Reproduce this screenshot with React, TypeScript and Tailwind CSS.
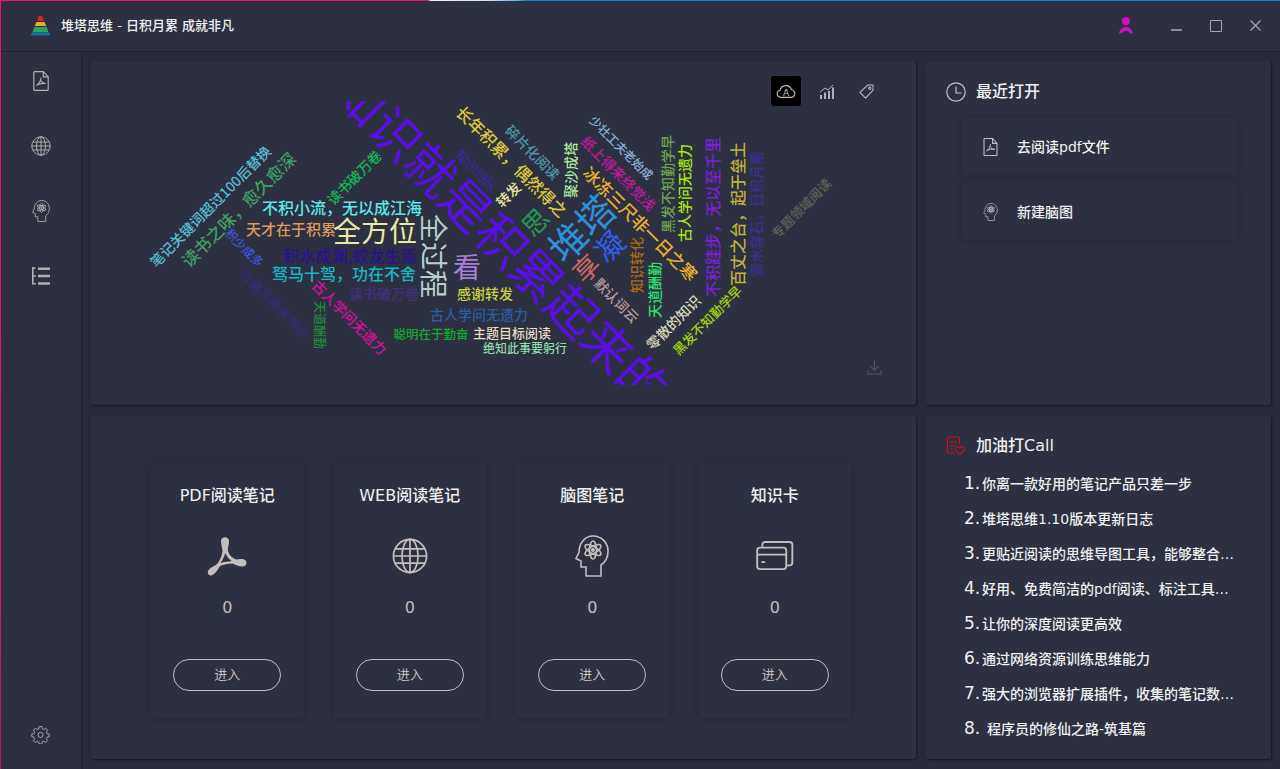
import React from "react";

const words: [string, number, number, number, number, string][] = [
  ["知识就是积累起来的", 504, 238, 50, 45, "#5a0fe8"],
  ["笔记关键词超过100后替换", 210, 206, 14, -45, "#56bfd0"],
  ["读书之味，愈久愈深", 238, 209, 17, -45, "#3f9e63"],
  ["读书破万卷", 354, 177, 14, -45, "#12b956"],
  ["不积小流，无以成江海", 342, 207, 16, 0, "#5fe6e6"],
  ["全方位", 375, 230, 28, 0, "#e8e8a8"],
  ["天才在于积累", 291, 228, 15, 0, "#d99a5a"],
  ["积水成渊,蛟龙生焉", 350, 255, 16, 0, "#2c1292"],
  ["驽马十驾，功在不舍", 344, 273, 16, 0, "#12b8c0"],
  ["积少成多", 245, 247, 12, 45, "#3d55e0"],
  ["日诵万卷读书远", 275, 303, 13, 45, "#3a2a7a"],
  ["读书破万卷", 384, 293, 14, 0, "#45307e"],
  ["古人学问无遗力", 350, 317, 14, 45, "#d60f9a"],
  ["天道酬勤", 320, 325, 12, 90, "#1f8a3a"],
  ["聪明在于勤奋", 431, 333, 12.5, 0, "#12a82e"],
  ["主题目标阅读", 512, 332, 13, 0, "#e6dcc0"],
  ["绝知此事要躬行", 525, 347, 12, 0, "#8fdcaa"],
  ["古人学问无遗力", 479, 314, 14, 0, "#2a5ea0"],
  ["感谢转发", 485, 293, 14, 0, "#c8d23c"],
  ["看", 467, 266, 28, 0, "#a87fd6"],
  ["全过程", 435, 256, 28, 90, "#b8d0c8"],
  ["长年积累，偶然得之", 512, 161, 16.5, 45, "#d8c83c"],
  ["碎片化阅读", 533, 152, 14, 45, "#4a98a8"],
  ["知识归队", 477, 170, 13, 45, "#3a2a9a"],
  ["转发", 508, 194, 14, -45, "#e6e6a0"],
  ["聚沙成塔", 570, 170, 14, -90, "#b0e8a0"],
  ["思", 534, 221, 26, -45, "#1f9a50"],
  ["堆塔", 580, 227, 38, -45, "#2f8fd8"],
  ["凝", 608, 245, 29, -45, "#2e5ff0"],
  ["享", 585, 267, 26, -45, "#d06a60"],
  ["默认词云", 617, 300, 14, 45, "#b89a9a"],
  ["少壮工夫老始成", 622, 147, 12, 45, "#8ab0d8"],
  ["纸上得来终觉浅", 619, 173, 14, 45, "#c0189a"],
  ["冰冻三尺非一日之寒", 641, 223, 17, 45, "#e8b030"],
  ["黑发不知勤学早", 667, 184, 14, -90, "#6fa050"],
  ["古人学问无遗力", 684, 193, 14, -90, "#a8e810"],
  ["不积跬步，无以至千里", 712, 217, 16, -90, "#7a20d8"],
  ["百丈之台，起于垒土", 737, 214, 16, -90, "#c0b040"],
  ["滴水穿石，日积月累", 756, 214, 14, -90, "#3a3090"],
  ["专题领域阅读", 801, 208, 13, -45, "#5f6358"],
  ["黑发不知勤学早", 707, 320, 13, -45, "#a0d010"],
  ["零散的知识", 673, 322, 14, -45, "#d8d8b8"],
  ["天道酬勤", 654, 290, 14, -90, "#30e070"],
  ["知识转化", 636, 265, 14, -90, "#a86a14"],
];

const calls = [
  "你离一款好用的笔记产品只差一步",
  "堆塔思维1.10版本更新日志",
  "更贴近阅读的思维导图工具，能够整合多种笔记内容",
  "好用、免费简洁的pdf阅读、标注工具，推荐给大家",
  "让你的深度阅读更高效",
  "通过网络资源训练思维能力",
  "强大的浏览器扩展插件，收集的笔记数据全部本地",
];

const PdfMark = ({ className }: { className: string }) => (
  <svg viewBox="0 0 40 40" className={className} fill="currentColor">
    <path
      fillRule="evenodd"
      d="M14 5C14 0 22 0 22 5C22 9 20.5 12 21 15C22 19 25 22 29 23.5C32 23 36 22.5 38 24C41 26 39 30.5 36 30.5C32 30.5 28 28.5 25.5 27.5C21 27.5 17 28.5 13 30C11 33 9 37 5.5 39C2 41-.5 37 1.5 34C4 31 8 30 10.5 27.5C13 24 15 20 15.5 15C15 11 14 8 14 5ZM18.3 17C17.5 20.5 15.5 24 13.5 27C17 26 21 25.5 24.5 25C21.8 23 19.5 20 18.3 17Z"
    />
  </svg>
);

const PdfFile = ({ className }: { className: string }) => (
  <svg viewBox="1.4 .9 17.2 22.2" className={className} fill="none" stroke="currentColor" strokeWidth="1.3">
    <path d="M3 1.5h9.5l5.5 6v14a1 1 0 0 1-1 1H3a1 1 0 0 1-1-1v-19a1 1 0 0 1 1-1z" />
    <path d="M12.5 1.5v6H18" />
    <path d="M10 8.5c0 3-2 6-5 8.5M9.7 11.5c1 2 2.5 3.5 5.8 3.3M5.5 16.5c3-1.8 6-2 9.5-1.8" strokeWidth="1.2" />
  </svg>
);

const Globe = ({ className }: { className: string }) => (
  <svg viewBox="0 0 38 38" className={className} fill="none" stroke="currentColor" strokeWidth="1.8">
    <circle cx="19" cy="19" r="17.5" />
    <ellipse cx="19" cy="19" rx="8.5" ry="17.5" />
    <path d="M19 1.5v35M3.5 11.5h31M1.5 19h35M3.5 26.5h31" />
  </svg>
);

const Head = ({ className }: { className: string }) => (
  <svg viewBox="0 0 34 42" className={className} fill="none" stroke="currentColor" strokeWidth="1.6">
    <path d="M11 41v-9H6v-6l-5-2.5 3-6C4 8 10 1 18 1c8.5 0 15 6.5 15 15 0 6-2.5 11-7 14v11z" />
    <ellipse cx="18" cy="15" rx="9" ry="3.5" transform="rotate(90 18 15)" />
    <ellipse cx="18" cy="15" rx="9" ry="3.5" transform="rotate(30 18 15)" />
    <ellipse cx="18" cy="15" rx="9" ry="3.5" transform="rotate(-30 18 15)" />
    <circle cx="18" cy="15" r="1.2" fill="currentColor" />
  </svg>
);

const Cards = ({ className }: { className: string }) => (
  <svg viewBox="0 0 40 32" className={className} fill="none" stroke="currentColor" strokeWidth="2">
    <path d="M6.5 6V4a3 3 0 0 1 3-3h26a3 3 0 0 1 3 3v19a3 3 0 0 1-3 3h-3" />
    <rect x="1" y="7" width="31" height="23" rx="3" />
    <path d="M1 14.5h31M5.5 22.5h4" />
  </svg>
);

const ListTree = ({ className }: { className: string }) => (
  <svg viewBox="0 0 18 18" className={className} fill="none" stroke="currentColor">
    <path d="M.8 0v17.5M0 1h3.5M.8 9h3M.8 16.8h3" strokeWidth="1.6" />
    <path d="M6 1.8h12M6 9h12M6 16.5h12" strokeWidth="2.6" />
  </svg>
);

const Gear = ({ className }: { className: string }) => (
  <svg viewBox="0 0 24 24" className={className} fill="none" stroke="currentColor" strokeWidth="1.1" strokeLinejoin="round">
    <path d="M10.3 2h3.4l.6 2.9 1.8.8 2.5-1.6 2.4 2.4-1.6 2.5.8 1.8 2.8.6v3.4l-2.8.6-.8 1.8 1.6 2.5-2.4 2.4-2.5-1.6-1.8.8-.6 2.7h-3.4l-.6-2.7-1.8-.8-2.5 1.6-2.4-2.4 1.6-2.5-.8-1.8-2.8-.6v-3.4l2.8-.6.8-1.8-1.6-2.5 2.4-2.4 2.5 1.6 1.8-.8z" />
    <circle cx="12" cy="12.5" r="3.2" />
  </svg>
);

const RecentPanel = () => (
  <section className="flex h-[344px] w-[345px] flex-col rounded-[3px] bg-[#2d3040] pt-5 shadow-[1px_1px_2px_rgba(0,0,0,0.45)]">
    <h2 className="flex items-center gap-[10px] pl-5 text-base font-medium leading-[22px] text-[#f0f0f0]">
      <svg viewBox="0 0 20 20" className="size-5 text-[#c4bebe]" fill="none" stroke="currentColor" strokeWidth="1.2">
        <circle cx="10" cy="10" r="9.2" />
        <path d="M10 4.5V11h5.5" />
      </svg>
      最近打开
    </h2>
    <div className="ml-9 mt-[15px] flex w-[275px] flex-col gap-2">
      <a className="flex h-[57px] items-center rounded-[3px] bg-[#2d3040] pl-[21px] text-sm font-medium text-[#f0f0f0] shadow-[0_1px_8px_rgba(0,0,0,0.18)]">
        <PdfFile className="mr-[19px] h-[18px] w-[15px] text-[#c4bebe]" />
        去阅读pdf文件
      </a>
      <a className="flex h-[57px] items-center rounded-[3px] bg-[#2d3040] pl-[21px] text-sm font-medium text-[#f0f0f0] shadow-[0_1px_8px_rgba(0,0,0,0.18)]">
        <Head className="mr-[19px] h-[18px] w-[15px] text-[#c4bebe]" />
        新建脑图
      </a>
    </div>
  </section>
);

const NoteCard = ({ title, icon }: { title: string; icon: React.ReactNode }) => (
  <div className="flex h-[255px] w-[152.5px] flex-col items-center rounded-[3px] bg-[#2d3040] pt-[21px] shadow-[0_0_8px_rgba(0,0,0,0.22)]">
    <h3 className="text-base font-medium leading-6 text-[#f0f0f0]">{title}</h3>
    <div className="mt-7 flex h-10 items-center justify-center text-[#c4bebe]">{icon}</div>
    <p className="mt-5 text-base leading-6 text-[#c4bebe]">0</p>
    <button className="mt-[39px] h-8 w-[108px] rounded-full border border-[#c4bebe] text-[13px] text-[#c4bebe]">进入</button>
  </div>
);

export default function App() {
  return (
    <div className="relative flex h-[769px] w-[1280px] flex-col overflow-hidden bg-[#2d3040] [font-family:'DejaVu_Sans','Noto_Sans_CJK_SC',sans-serif]">
      <div className="absolute inset-x-0 top-0 z-10 h-px bg-[linear-gradient(90deg,#f0185a_0,#f0185a_33.4%,#f0f0ff_33.7%,#d0e4f8_38%,#60b0e8_40.5%,#0a84d0_41%,#0a84d0_100%)]" />
      <div className="absolute inset-y-0 left-0 z-10 w-px bg-[linear-gradient(180deg,#f0185a_0,#f0185a_40%,#c01070_100%)]" />

      <header className="flex h-[52px] shrink-0 items-center border-b border-[#1e202c] pl-[30px]">
        <svg viewBox="0 0 21 20" className="h-5 w-[21px]">
          <path d="M9 0h3l2 5H7z" fill="#d8202a" />
          <path d="M6.5 6h8l1.8 4H4.7z" fill="#f0a830" />
          <path d="M4.3 11h12.4l2 5.5H2.3z" fill="#2aa65a" />
          <path d="M1.5 17h18l.8 2.5H.7z" fill="#0a70c0" />
        </svg>
        <h1 className="ml-[10px] text-[13px] font-medium text-[#f0f0f0]">堆塔思维 - 日积月累 成就非凡</h1>
        <div className="ml-auto flex items-center">
          <svg viewBox="0 0 14 17" className="h-[17px] w-[14px] text-[#d010c0]" fill="currentColor">
            <circle cx="7" cy="4" r="4" />
            <path d="M0 16.5C.5 12.5 3.5 10 7 10s6.5 2.5 7 6.5c-1.5 0-2.5-.2-3.5-1-.8-1-2-1.5-3.5-1.5s-2.7.5-3.5 1.5c-1 .8-2 1-3.5 1z" />
          </svg>
          <div className="ml-[38px] mr-[19px] flex items-center gap-[28px] text-[#a8a4a4]">
            <svg viewBox="0 0 11 12" className="h-3 w-[11px]" stroke="currentColor"><path d="M0 10h11" strokeWidth="1.6" /></svg>
            <svg viewBox="0 0 12 12" className="size-3" fill="none" stroke="currentColor"><path d="M.5.5h11v11H.5z" /></svg>
            <svg viewBox="0 0 11 11" className="size-[11px]" stroke="currentColor" strokeWidth="1.3"><path d="M.5.5l10 10M10.5.5l-10 10" /></svg>
          </div>
        </div>
      </header>

      <div className="flex min-h-0 flex-1">
        <nav className="flex w-[82px] shrink-0 flex-col items-center gap-[41px] border-r border-[#1e202c] pb-[23px] pt-[17px] text-[#b4b0b0]">
          <div className="flex size-6 items-center justify-center"><PdfFile className="h-5 w-4" /></div>
          <div className="flex size-6 items-center justify-center"><Globe className="size-5" /></div>
          <div className="flex size-6 items-center justify-center"><Head className="h-[22px] w-[18px]" /></div>
          <div className="flex size-6 items-center justify-center"><ListTree className="size-[18px]" /></div>
          <div className="mt-auto flex size-6 items-center justify-center"><Gear className="size-[19px]" /></div>
        </nav>

        <main className="grid flex-1 grid-cols-[825px_345px] grid-rows-[344px_344px] gap-[10px] bg-[#282b39] pl-[9px] pt-[9px]">
          <section className="relative h-[344px] rounded-[3px] bg-[#2d3040] pl-5 pt-10 shadow-[1px_1px_2px_rgba(0,0,0,0.45)]">
            <svg viewBox="111 101 730 284" className="block h-[284px] w-[730px] [font-family:'Noto_Sans_CJK_SC',sans-serif]">
              {words.map(([text, x, y, size, rot, color], i) => (
                <text
                  key={i}
                  x={x}
                  y={y}
                  fontSize={size}
                  fontWeight={size < 20 ? 500 : 400}
                  fill={color}
                  textAnchor="middle"
                  dominantBaseline="central"
                  transform={`rotate(${rot} ${x} ${y})`}
                >
                  {text}
                </text>
              ))}
            </svg>

            <div className="absolute right-[42px] top-[15px] flex items-center text-[#c4bebe]">
              <span className="flex h-[30px] w-[30px] items-center justify-center rounded-[3px] bg-black">
                <svg viewBox="0 0 22 16" className="h-[15px] w-5" fill="none" stroke="currentColor" strokeWidth="1.2">
                  <path d="M6 14.5H5A4 4 0 0 1 4.5 6.6 6.5 6.5 0 0 1 17 6a4.3 4.3 0 0 1 0 8.5z" />
                  <text x="11" y="13" fontSize="10" textAnchor="middle" fill="currentColor" stroke="none">A</text>
                </svg>
              </span>
              <svg viewBox="0 0 16 15" className="ml-[18px] h-[15px] w-4 text-[#b4b0b0]" fill="currentColor">
                <path d="M1 11h2v4H1zM5 8.5h2V15H5zM9 7h2v8H9zM13 3.5h2V15h-2z" />
                <path d="M1 8l5-4 3 2 5-5" fill="none" stroke="currentColor" strokeWidth="1" />
              </svg>
              <svg viewBox="0 0 16 16" className="ml-6 size-[15px]" fill="none" stroke="currentColor" strokeWidth="1.1">
                <path d="M9.5 1H15v5.5L7 15 1 9z" strokeLinejoin="round" />
                <circle cx="11.5" cy="4.5" r="1.2" />
              </svg>
            </div>
            <svg viewBox="0 0 16 16" className="absolute right-[34px] top-[299px] size-[15px] text-[#565864]" fill="none" stroke="currentColor" strokeWidth="1.1">
              <path d="M8 .5v10M3.5 6.5 8 11l4.5-4.5M1 11v4h14v-4" />
            </svg>
          </section>

          <RecentPanel />

          <section className="flex h-[344px] gap-[30px] rounded-[3px] bg-[#2d3040] pl-[60px] pt-12 shadow-[1px_1px_2px_rgba(0,0,0,0.45)]">
            <NoteCard title="PDF阅读笔记" icon={<PdfMark className="size-10" />} />
            <NoteCard title="WEB阅读笔记" icon={<Globe className="size-9" />} />
            <NoteCard title="脑图笔记" icon={<Head className="h-[42px] w-[34px]" />} />
            <NoteCard title="知识卡" icon={<Cards className="h-[30px] w-[38px]" />} />
          </section>

          <section className="h-[344px] rounded-[3px] bg-[#2d3040] pt-5 shadow-[1px_1px_2px_rgba(0,0,0,0.45)]">
            <h2 className="flex items-center gap-[10px] pl-5 text-base font-medium leading-[22px] text-[#f0f0f0]">
              <svg viewBox="0 0 20 20" className="size-5 text-[#d01020]" fill="none" stroke="currentColor" strokeWidth="1.1">
                <path d="M9 17H3a1.5 1.5 0 0 1-1.5-1.5v-13A1.5 1.5 0 0 1 3 1h9a1.5 1.5 0 0 1 1.5 1.5V8" />
                <path d="M4 6h7M4 9.5h5M4 13h3" />
                <path d="M14 18.5l-3.8-3.8a2.3 2.3 0 0 1 3.3-3.3l.5.5.5-.5a2.3 2.3 0 0 1 3.3 3.3z" />
              </svg>
              加油打Call
            </h2>
            <ol className="mt-[9px] pl-[38px] text-[#f0f0f0]">
              {calls.map((text, i) => (
                <li key={i} className="flex h-[35px] items-center">
                  <span className="w-[18px] shrink-0 text-[17px]">{i + 1}.</span>
                  <span className="w-[253px] truncate text-sm font-medium">{text}</span>
                </li>
              ))}
              <li className="flex h-[35px] items-center">
                <span className="w-[23px] shrink-0 text-[17px]">8.</span>
                <span className="text-sm font-medium">程序员的修仙之路-筑基篇</span>
              </li>
            </ol>
          </section>
        </main>
      </div>
    </div>
  );
}
